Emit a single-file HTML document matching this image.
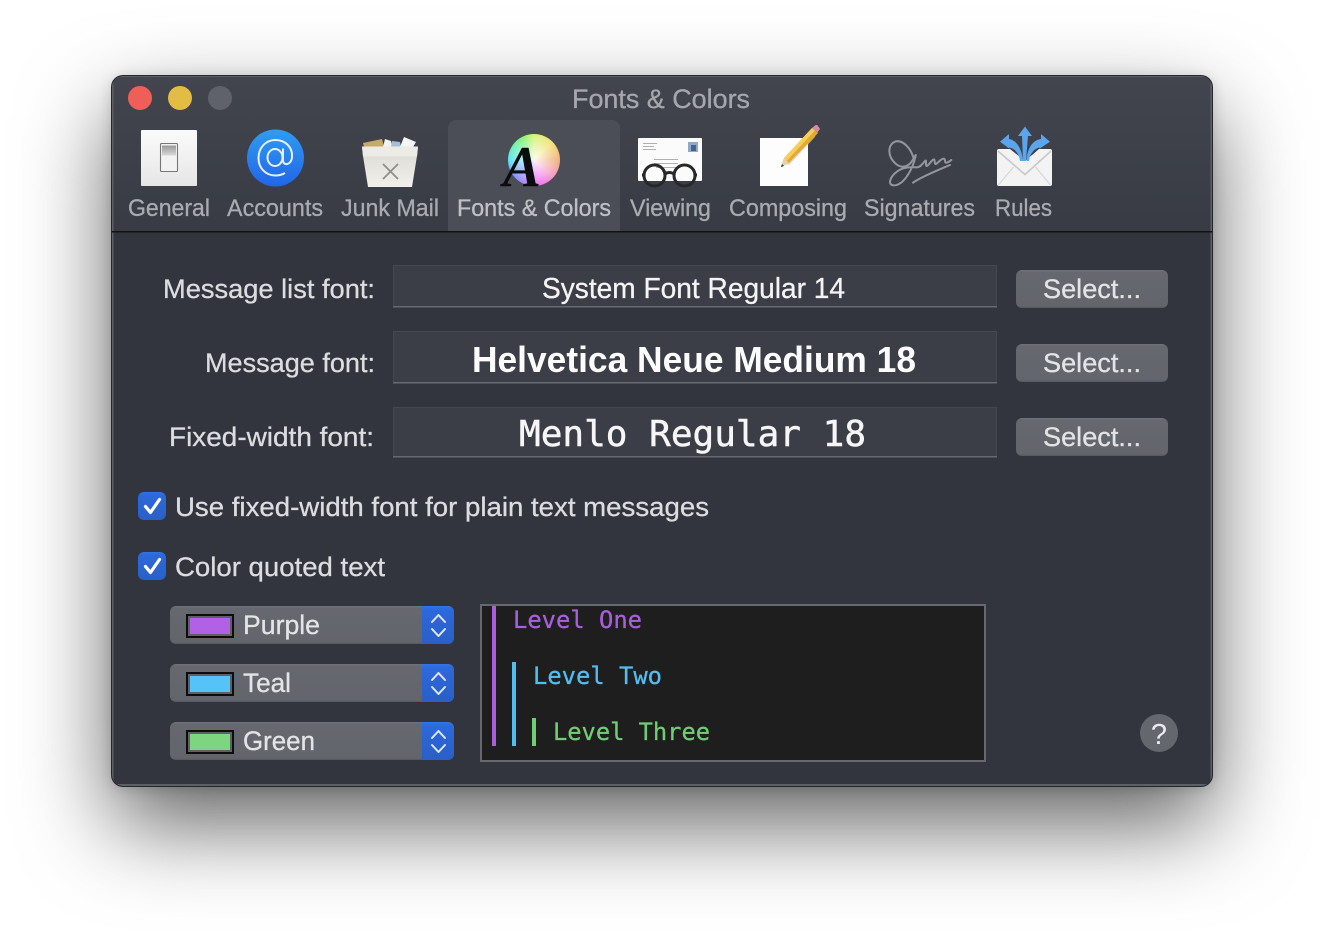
<!DOCTYPE html>
<html><head><meta charset="utf-8">
<style>
html,body{margin:0;padding:0;width:1324px;height:934px;background:#fff;overflow:hidden}
#sh{position:absolute;left:112px;top:76px;width:1100px;height:710px;border-radius:12px;box-shadow:0 38px 90px rgba(0,0,0,.62),0 2px 14px rgba(0,0,0,.18)}
svg{position:absolute;left:0;top:0}
text{font-family:"Liberation Sans",sans-serif}
.tb{font-size:24px;fill:#a9abb1;stroke:#a9abb1;stroke-width:.3px}
.lb{font-size:27px;fill:#dcdde0;stroke:#dcdde0;stroke-width:.3px}
.bt{font-size:27px;fill:#e3e4e6;stroke:#e3e4e6;stroke-width:.3px}
.mono{font-family:"DejaVu Sans Mono","Liberation Mono",monospace}
</style></head><body>
<div id="sh"></div>
<svg width="1324" height="934" viewBox="0 0 1324 934" xmlns="http://www.w3.org/2000/svg">
<defs>
<linearGradient id="tbg" x1="0" y1="0" x2="0" y2="1"><stop offset="0" stop-color="#42454e"/><stop offset="1" stop-color="#383b44"/></linearGradient>
<linearGradient id="btn" x1="0" y1="0" x2="0" y2="1"><stop offset="0" stop-color="#71737a"/><stop offset=".06" stop-color="#66686f"/><stop offset=".95" stop-color="#63656c"/><stop offset="1" stop-color="#55575e"/></linearGradient>
<linearGradient id="blue" x1="0" y1="0" x2="0" y2="1"><stop offset="0" stop-color="#3374e6"/><stop offset=".1" stop-color="#2c69dc"/><stop offset="1" stop-color="#2a5fc6"/></linearGradient>
<linearGradient id="at" x1="0" y1="0" x2="0" y2="1"><stop offset="0" stop-color="#2f9cf0"/><stop offset="1" stop-color="#2265e8"/></linearGradient>
<linearGradient id="pap" x1="0" y1="0" x2="0" y2="1"><stop offset="0" stop-color="#fbfbfb"/><stop offset="1" stop-color="#e6e6e6"/></linearGradient>
<linearGradient id="bkt" x1="0" y1="0" x2="0" y2="1"><stop offset="0" stop-color="#c9c7c0"/><stop offset=".3" stop-color="#e2e0da"/><stop offset="1" stop-color="#f1f0eb"/></linearGradient>
<linearGradient id="sw" x1="0" y1="0" x2="0" y2="1"><stop offset="0" stop-color="#999"/><stop offset="1" stop-color="#d8d8d8"/></linearGradient>
<clipPath id="win"><rect x="112" y="76" width="1100" height="710" rx="11"/></clipPath>
</defs>

<!-- window -->
<rect x="111" y="75" width="1102" height="712" rx="12" fill="#26272b"/>
<g clip-path="url(#win)">
<rect x="112" y="76" width="1100" height="710" fill="#5c5f66"/>
<rect x="113.500" y="77" width="1097" height="155" fill="url(#tbg)"/>
<rect x="113.500" y="232" width="1097" height="552" fill="#32353d"/>
<rect x="112" y="231" width="1100" height="1.500" fill="#111214"/>
</g>

<!-- traffic lights -->
<circle cx="140" cy="98" r="12" fill="#ee5f57"/>
<circle cx="180" cy="98" r="12" fill="#e3bc45"/>
<circle cx="220" cy="98" r="12" fill="#5f626a"/>
<text x="572" y="108" font-size="27" fill="#a5a7ac" stroke="#a5a7ac" stroke-width=".3" textLength="178" lengthAdjust="spacingAndGlyphs">Fonts &amp; Colors</text>

<!-- selected tab -->
<path d="M448 231V128a8 8 0 0 1 8-8h156a8 8 0 0 1 8 8v103z" fill="#4b4e56"/>

<!-- General -->
<rect x="141" y="130" width="56" height="56" rx="1" fill="url(#pap)"/>
<rect x="160.500" y="143.500" width="17" height="28" rx="1" fill="#f2f2f2" stroke="#77777a" stroke-width="1.100"/>
<rect x="162" y="145.500" width="14" height="10" fill="url(#sw)"/>

<!-- Accounts -->
<circle cx="275.500" cy="158" r="28.500" fill="url(#at)"/>
<g fill="none" stroke="#e6f0fd" stroke-width="2">
<ellipse cx="275" cy="157.500" rx="7.500" ry="8.500"/>
<path d="M283 148.500v12c0 5.500 8.500 5 9-3.500c.8-10-7-17-16.500-17c-10 0-17 8-17 18c0 10.500 7.500 17.500 17 17.500c4 0 7-1 9.500-2.500"/>
</g>

<!-- Junk Mail -->
<path d="M363 143l19-4 2 8h-20z" fill="#c9a96a"/>
<path d="M383 147l2-8 6 2 1 6z" fill="#f2f2f2"/>
<path d="M391 147l1-6 8 1 1 5z" fill="#a3bfd6"/>
<path d="M400 147l4-10 12 5-3 5z" fill="#f4f5f6"/>
<path d="M362 147h56l-1 9-5 31h-44l-5-31z" fill="url(#bkt)"/>
<path d="M362 146.500h56l-1 10h-54z" fill="#ecebe6"/>
<path d="M383 164l15 15M398 164l-15 15" stroke="#8f8e88" stroke-width="1.800" fill="none"/>

<!-- Fonts & Colors -->
<foreignObject x="508" y="134" width="52" height="52"><div xmlns="http://www.w3.org/1999/xhtml" style="width:52px;height:52px;border-radius:50%;background:radial-gradient(circle,rgba(255,255,255,.9) 0%,rgba(255,255,255,.45) 50%,rgba(255,255,255,0) 95%),conic-gradient(#c8ee50 0deg,#f2d84a 45deg,#ea9650 90deg,#ee78b0 130deg,#ee48f0 165deg,#9058ff 205deg,#4878ff 235deg,#28d8f0 270deg,#38ee98 305deg,#68ee48 335deg,#c8ee50 360deg)"></div></foreignObject>
<text x="503" y="186" font-size="58" font-weight="bold" font-style="italic" fill="#0c0c0c" style="font-family:'Liberation Serif',serif" textLength="38" lengthAdjust="spacingAndGlyphs">A</text>

<!-- Viewing -->
<rect x="638" y="138" width="64" height="43" rx="1" fill="#fbfbfb"/>
<rect x="688" y="142" width="10" height="10" fill="#8ea9c9"/>
<rect x="691" y="145" width="5" height="6" fill="#45648c"/>
<g fill="#b0b0b0"><rect x="643" y="143" width="14" height="1"/><rect x="643" y="146" width="11" height="1"/><rect x="643" y="149" width="13" height="1"/><rect x="654" y="159" width="24" height="1"/><rect x="654" y="163" width="24" height="1"/><rect x="656" y="167" width="24" height="1"/><rect x="662" y="171" width="10" height="1"/></g>
<g fill="none" stroke="#27272a" stroke-width="3"><circle cx="654.500" cy="175.500" r="10.500"/><circle cx="684.500" cy="175.500" r="10.500"/><path d="M665 174q4.500-3 9 0M644 175l-2 0M695 175l2 0"/></g>

<!-- Composing -->
<rect x="760" y="138" width="48" height="48" fill="#fdfdfd"/>
<path d="M786 164l30-31 -1 4-26 28z" fill="#ccc" opacity=".7"/>
<path d="M781 167l3-9 28-30 6 5-29 30z" fill="#e8a92f"/>
<path d="M784 158l28-30 3 2.500-29 31z" fill="#f6cf62"/>
<path d="M781 167l3-9 5 5z" fill="#e9cfa4"/>
<path d="M781 167l1-3 2 2z" fill="#333"/>
<path d="M812 128l3-2.500a2 2 0 0 1 3 .5l2 3-2.500 3.500z" fill="#d98aa0"/>

<!-- Signatures -->
<g transform="translate(750 110) scale(.3333)" fill="none" stroke="#93969c" stroke-width="6" stroke-linecap="round" stroke-linejoin="round">
<path d="M492 148C482 110 455 88 435 95C412 105 412 140 438 162C458 178 478 168 488 150C498 135 500 128 495 145C488 175 462 228 430 226C412 224 420 200 442 184C462 170 480 172 500 172C512 172 520 158 526 152C530 148 526 168 530 168C538 166 545 148 552 148C556 150 552 164 558 162C566 158 572 146 582 146C588 148 582 160 590 158C596 156 602 152 604 150"/>
<path d="M489 218C515 200 565 180 600 165"/>
</g>

<!-- Rules -->
<path d="M999 149h11l15 12 14-12h11a2 2 0 0 1 2 2v33a2 2 0 0 1-2 2h-51a2 2 0 0 1-2-2v-33a2 2 0 0 1 2-2z" fill="#f3f3f3"/>
<path d="M998 151l27 23.500 26-23.500" fill="none" stroke="#c9c9c9" stroke-width="1.600"/>
<path d="M998.500 185l15-18M1050.500 185l-15-18" fill="none" stroke="#d6d6d6" stroke-width="1.200"/>
<path d="M1023 161l-1-25h-4l7-9.500 7 9.500h-4l-2 25z" fill="#5aa5ec"/>
<path d="M1020 161C1019 153 1014 148 1009 147.500L1010 149L1000 141.700L1009 134L1009 139C1016 140 1022 148 1023 161z" fill="#5aa5ec"/>
<path d="M1029 161C1030 153 1035 148 1040 147.500L1039 149L1050 141.700L1041 134L1041 139C1033 140 1027 148 1026.500 161z" fill="#5aa5ec"/>

<!-- toolbar labels -->
<text class="tb" x="128" y="216" textLength="82" lengthAdjust="spacingAndGlyphs">General</text>
<text class="tb" x="227" y="216" textLength="96" lengthAdjust="spacingAndGlyphs">Accounts</text>
<text class="tb" x="341" y="216" textLength="98" lengthAdjust="spacingAndGlyphs">Junk Mail</text>
<text class="tb" x="457" y="216" textLength="154" lengthAdjust="spacingAndGlyphs" style="fill:#bfc1c6;stroke:#bfc1c6">Fonts &amp; Colors</text>
<text class="tb" x="630" y="216" textLength="81" lengthAdjust="spacingAndGlyphs">Viewing</text>
<text class="tb" x="729" y="216" textLength="118" lengthAdjust="spacingAndGlyphs">Composing</text>
<text class="tb" x="864" y="216" textLength="111" lengthAdjust="spacingAndGlyphs">Signatures</text>
<text class="tb" x="995" y="216" textLength="57" lengthAdjust="spacingAndGlyphs">Rules</text>

<!-- labels -->
<text class="lb" x="163" y="298" textLength="212" lengthAdjust="spacingAndGlyphs">Message list font:</text>
<text class="lb" x="205" y="372" textLength="170" lengthAdjust="spacingAndGlyphs">Message font:</text>
<text class="lb" x="169" y="446" textLength="205" lengthAdjust="spacingAndGlyphs">Fixed-width font:</text>

<!-- fields -->
<g>
<rect x="393.500" y="265.500" width="603" height="41" fill="#3b3e47" stroke="#454851"/>
<rect x="393" y="306" width="604" height="1.500" fill="#666971"/>
<rect x="393.500" y="331.500" width="603" height="51" fill="#3b3e47" stroke="#454851"/>
<rect x="393" y="382" width="604" height="1.500" fill="#666971"/>
<rect x="393.500" y="407.500" width="603" height="49" fill="#3b3e47" stroke="#454851"/>
<rect x="393" y="456" width="604" height="1.500" fill="#666971"/>
</g>
<text x="542" y="298" font-size="29" fill="#f4f4f5" stroke="#f4f4f5" stroke-width=".3" textLength="303" lengthAdjust="spacingAndGlyphs">System Font Regular 14</text>
<text x="472" y="372" font-size="36" font-weight="bold" fill="#fcfcfc" textLength="444" lengthAdjust="spacingAndGlyphs">Helvetica Neue Medium 18</text>
<text class="mono" x="519" y="446" font-size="36" fill="#f6f6f7" stroke="#f6f6f7" stroke-width=".5" textLength="347" lengthAdjust="spacingAndGlyphs">Menlo Regular 18</text>

<!-- buttons -->
<rect x="1016" y="270" width="152" height="38" rx="6" fill="url(#btn)"/>
<rect x="1016" y="344" width="152" height="38" rx="6" fill="url(#btn)"/>
<rect x="1016" y="418" width="152" height="38" rx="6" fill="url(#btn)"/>
<text class="bt" x="1043" y="298" textLength="98" lengthAdjust="spacingAndGlyphs">Select...</text>
<text class="bt" x="1043" y="372" textLength="98" lengthAdjust="spacingAndGlyphs">Select...</text>
<text class="bt" x="1043" y="446" textLength="98" lengthAdjust="spacingAndGlyphs">Select...</text>

<!-- checkboxes -->
<rect x="138" y="492" width="28" height="28" rx="6" fill="url(#blue)"/>
<path d="M145.500 506.500l5 6 9-13" fill="none" stroke="#fff" stroke-width="3.200" stroke-linecap="round" stroke-linejoin="round"/>
<rect x="138" y="552" width="28" height="28" rx="6" fill="url(#blue)"/>
<path d="M145.500 566.500l5 6 9-13" fill="none" stroke="#fff" stroke-width="3.200" stroke-linecap="round" stroke-linejoin="round"/>
<text class="lb" x="175" y="516" textLength="534" lengthAdjust="spacingAndGlyphs">Use fixed-width font for plain text messages</text>
<text class="lb" x="175" y="576" textLength="210" lengthAdjust="spacingAndGlyphs">Color quoted text</text>

<!-- popups -->
<g>
<rect x="170" y="606" width="284" height="38" rx="6" fill="url(#btn)"/>
<path d="M422 606h26a6 6 0 0 1 6 6v26a6 6 0 0 1-6 6h-26z" fill="url(#blue)"/>
<rect x="187" y="615" width="46" height="22" fill="#b061e6" stroke="#0d0d0d" stroke-width="2"/>
<rect x="189" y="617" width="42" height="18" fill="none" stroke="#5f5f66" stroke-width="2"/>
<text class="bt" x="243" y="634" textLength="77" lengthAdjust="spacingAndGlyphs">Purple</text>
<path d="M432 622l6.500-7 6.500 7M432 629l6.500 7 6.500-7" fill="none" stroke="#dfe8fa" stroke-width="2" stroke-linecap="round" stroke-linejoin="round"/>
</g>
<g transform="translate(0 58)">
<rect x="170" y="606" width="284" height="38" rx="6" fill="url(#btn)"/>
<path d="M422 606h26a6 6 0 0 1 6 6v26a6 6 0 0 1-6 6h-26z" fill="url(#blue)"/>
<rect x="187" y="615" width="46" height="22" fill="#55c3f7" stroke="#0d0d0d" stroke-width="2"/>
<rect x="189" y="617" width="42" height="18" fill="none" stroke="#5f5f66" stroke-width="2"/>
<text class="bt" x="243" y="634" textLength="48" lengthAdjust="spacingAndGlyphs">Teal</text>
<path d="M432 622l6.500-7 6.500 7M432 629l6.500 7 6.500-7" fill="none" stroke="#dfe8fa" stroke-width="2" stroke-linecap="round" stroke-linejoin="round"/>
</g>
<g transform="translate(0 116)">
<rect x="170" y="606" width="284" height="38" rx="6" fill="url(#btn)"/>
<path d="M422 606h26a6 6 0 0 1 6 6v26a6 6 0 0 1-6 6h-26z" fill="url(#blue)"/>
<rect x="187" y="615" width="46" height="22" fill="#7dd67f" stroke="#0d0d0d" stroke-width="2"/>
<rect x="189" y="617" width="42" height="18" fill="none" stroke="#5f5f66" stroke-width="2"/>
<text class="bt" x="243" y="634" textLength="72" lengthAdjust="spacingAndGlyphs">Green</text>
<path d="M432 622l6.500-7 6.500 7M432 629l6.500 7 6.500-7" fill="none" stroke="#dfe8fa" stroke-width="2" stroke-linecap="round" stroke-linejoin="round"/>
</g>

<!-- preview -->
<rect x="481" y="605" width="504" height="156" fill="#1e1e1e" stroke="#66686e" stroke-width="2"/>
<rect x="492" y="606" width="4" height="140" fill="#a95fdc"/>
<rect x="512" y="662" width="4" height="84" fill="#52bdf0"/>
<rect x="532" y="718" width="4" height="28" fill="#70cd73"/>
<text class="mono" x="513" y="628" font-size="24" fill="#a95fdc" stroke="#a95fdc" stroke-width=".3" textLength="129" lengthAdjust="spacingAndGlyphs">Level One</text>
<text class="mono" x="533" y="684" font-size="24" fill="#52bdf0" stroke="#52bdf0" stroke-width=".3" textLength="129" lengthAdjust="spacingAndGlyphs">Level Two</text>
<text class="mono" x="553" y="740" font-size="24" fill="#70cd73" stroke="#70cd73" stroke-width=".3" textLength="157" lengthAdjust="spacingAndGlyphs">Level Three</text>

<!-- help -->
<circle cx="1159" cy="733" r="19" fill="#65676e"/>
<text x="1159" y="744" font-size="29" text-anchor="middle" fill="#ececee">?</text>
</svg>
</body></html>
